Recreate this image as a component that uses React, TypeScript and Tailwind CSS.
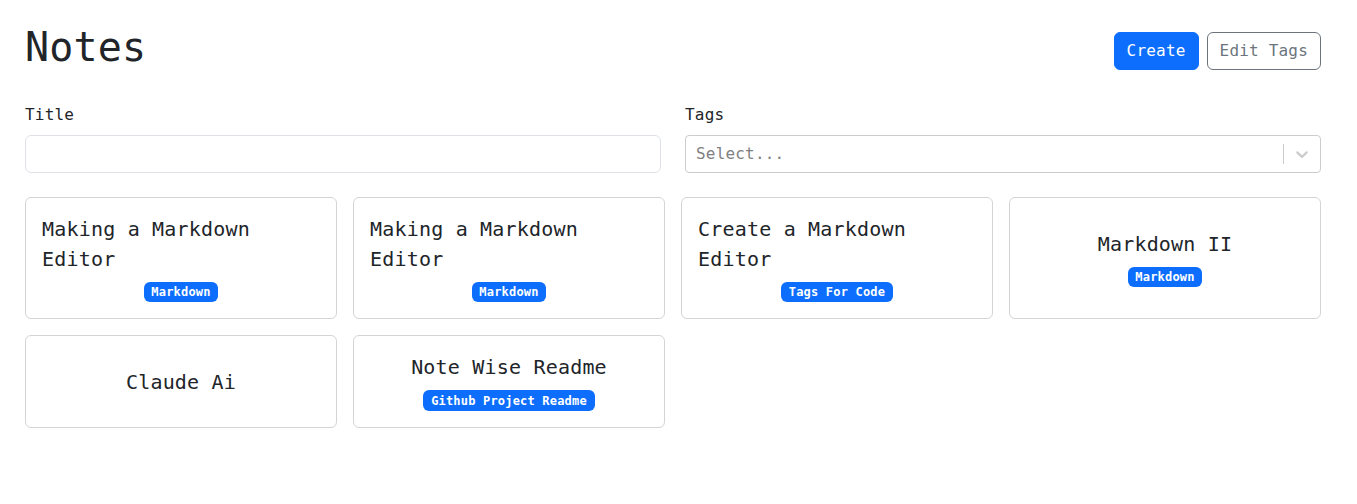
import { ChangeEvent, useState } from "react";

type Note = {
  id: string;
  title: string;
  tags: string[];
};

const notes: Note[] = [
  { id: "1", title: "Making a Markdown Editor", tags: ["Markdown"] },
  { id: "2", title: "Making a Markdown Editor", tags: ["Markdown"] },
  { id: "3", title: "Create a Markdown Editor", tags: ["Tags For Code"] },
  { id: "4", title: "Markdown II", tags: ["Markdown"] },
  { id: "5", title: "Claude Ai", tags: [] },
  { id: "6", title: "Note Wise Readme", tags: ["Github Project Readme"] },
];

function NoteCard({ note }: { note: Note }) {
  return (
    <a
      href="#"
      className="h-full rounded-[6px] border border-[#d3d4d5] bg-white text-[#212529] no-underline"
    >
      <div className="flex h-full flex-col items-center justify-center gap-2 p-4">
        <span className="text-[20px] leading-[30px]">{note.title}</span>
        {note.tags.length > 0 && (
          <div className="flex flex-wrap justify-center gap-1">
            {note.tags.map((tag) => (
              <span
                key={tag}
                className="rounded-[6px] bg-[#0d6efd] px-[7.8px] py-[4.2px] text-[12px] leading-none font-bold text-white"
              >
                {tag}
              </span>
            ))}
          </div>
        )}
      </div>
    </a>
  );
}

export default function App() {
  const [title, setTitle] = useState("");

  const filtered = notes.filter((n) =>
    n.title.toLowerCase().includes(title.toLowerCase())
  );

  return (
    <div className="min-h-screen bg-white pt-[23px] pr-[36px] pl-[25px] font-['DejaVu_Sans_Mono',monospace] text-[16px] leading-6 tracking-[0.012em] text-[#212529]">
      {/* header */}
      <div className="mb-6 flex items-center justify-between">
        <h1 className="mb-2 text-[40px] leading-[48px] font-normal">Notes</h1>
        <div className="flex gap-2">
          <button className="rounded-[6px] border border-[#0d6efd] bg-[#0d6efd] px-3 py-[6px] text-white">
            Create
          </button>
          <button className="rounded-[6px] border border-[#6c757d] bg-white px-3 py-[6px] text-[#6c757d]">
            Edit Tags
          </button>
        </div>
      </div>

      {/* search form */}
      <form className="mb-6 grid grid-cols-2 gap-6">
        <div>
          <label className="mb-2 block">Title</label>
          <input
            type="text"
            value={title}
            onChange={(e: ChangeEvent<HTMLInputElement>) => setTitle(e.target.value)}
            className="block h-[38px] w-full rounded-[6px] border border-[#dee2e6] px-3 outline-none"
          />
        </div>
        <div>
          <label className="mb-2 block">Tags</label>
          <div className="flex h-[38px] items-center rounded-[4px] border border-[#cccccc] bg-white">
            <div className="flex-1 px-[10px] text-[#808080]">Select...</div>
            <span className="h-5 w-px bg-[#cccccc]" />
            <div className="flex p-2 text-[#cccccc]">
              <svg width="20" height="20" viewBox="0 0 20 20" fill="currentColor">
                <path d="M4.516 7.548c0.436-0.446 1.043-0.481 1.576 0l3.908 3.747 3.908-3.747c0.533-0.481 1.141-0.446 1.574 0 0.436 0.445 0.408 1.197 0 1.615-0.406 0.418-4.695 4.502-4.695 4.502-0.217 0.223-0.502 0.335-0.787 0.335s-0.57-0.112-0.789-0.335c0 0-4.287-4.084-4.695-4.502s-0.436-1.170 0-1.615z" />
              </svg>
            </div>
          </div>
        </div>
      </form>

      {/* notes */}
      <div className="grid grid-cols-4 gap-4">
        {filtered.map((note) => (
          <NoteCard key={note.id} note={note} />
        ))}
      </div>
    </div>
  );
}
